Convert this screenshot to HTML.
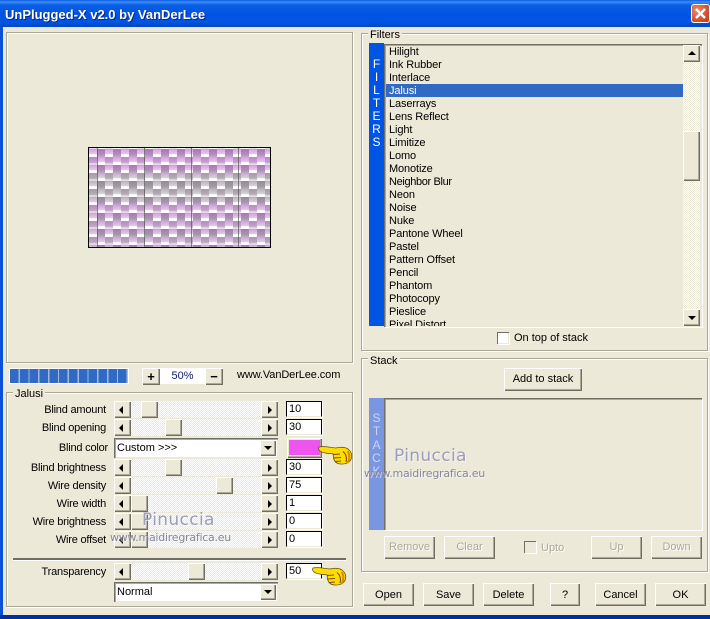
<!DOCTYPE html>
<html><head><meta charset="utf-8"><title>UnPlugged-X</title>
<style>
html,body{margin:0;padding:0;width:710px;height:619px;overflow:hidden;background:#ece9d8}
*{box-sizing:border-box}
body{font:11px/13px "Liberation Sans",sans-serif;color:#000;position:relative}
.a{position:absolute}
.t{position:absolute;white-space:nowrap;line-height:13px}
.r{position:absolute;white-space:nowrap;line-height:13px;text-align:right;width:100px;left:6px;letter-spacing:-.2px}
.gb{position:absolute;border:1px solid #aca899;box-shadow:inset 1px 1px #fff,1px 1px #fff}
.lab{position:absolute;background:#ece9d8;padding:0 2px;line-height:13px;white-space:nowrap}
.b{position:absolute;background:#ece9d8;box-shadow:inset 1px 1px #fff,inset -1px -1px #716f64,inset -2px -2px #aca899;text-align:center;white-space:nowrap}
.d{color:#aca899;text-shadow:1px 1px #fff}
.tr{position:absolute;left:114px;width:164px;height:17px;background:conic-gradient(#fff 25%,#ece9d8 0 50%,#fff 0 75%,#ece9d8 0) 0 0/2px 2px}
.sb{position:absolute;top:0;width:17px;height:17px}
.th{position:absolute;top:0;width:17px;height:17px}
.ar{position:absolute;width:0;height:0;top:5px;border:4px solid transparent;border-left-width:0;border-right:4px solid #000;left:5px}
.ar.rt{border-right-width:0;border-left:4px solid #000;left:7px}
.in{position:absolute;left:286px;width:36px;height:16px;background:#fff;border:1px solid #000;border-bottom-color:#ece9d8;padding-left:2px;line-height:14px;box-shadow:1px 1px #fff}
.cb{position:absolute;left:114px;width:164px;height:20px;background:#fff;box-shadow:inset 1px 1px #716f64,inset 2px 2px #aca899,inset -1px -1px #ece9d8;padding:4px 0 0 3px;line-height:13px}
.cbb{position:absolute;right:2px;top:2px;width:16px;height:16px}
.cbb i{position:absolute;left:4px;top:6px;width:0;height:0;border:4px solid transparent;border-bottom-width:0;border-top:4px solid #000}
.li{position:absolute;left:3px;height:13px;line-height:13px;white-space:nowrap;letter-spacing:-.12px}
.sl{position:absolute;width:15px;text-align:center;left:369px;font-size:12px;line-height:14px}
.ck{position:absolute;width:12px;height:12px;background:#fff;box-shadow:inset 1px 1px #716f64,inset -1px -1px #ece9d8,1px 1px #fff}
.wm1{position:absolute;font:400 17px/18px "DejaVu Sans",sans-serif;color:#9c9cbc;letter-spacing:.35px;text-shadow:1px 1px rgba(255,255,255,.6);white-space:nowrap}
.wm2{position:absolute;font:11px/13px "DejaVu Sans",sans-serif;color:#85869e;letter-spacing:-.25px;text-shadow:1px 1px rgba(255,255,255,.5);white-space:nowrap}
</style></head><body>

<div class="a" style="left:0;top:0;width:710px;height:27px;background:linear-gradient(#0a5ce8 0,#3d8cf5 2px,#0a5fe4 5px,#0054e3 14px,#0055e5 22px,#0049c4 26px)"></div>
<div class="t" style="left:5px;top:7px;font:bold 13px/16px 'Liberation Sans',sans-serif;color:#fff;text-shadow:1px 1px #0a2a80">UnPlugged-X v2.0 by VanDerLee</div>
<div class="a" style="left:691px;top:4px;width:19px;height:19px;border-radius:3px;background:radial-gradient(circle at 30% 30%,#e98a6c,#d8502c 60%,#c03a18);border:1px solid #fff">
<svg width="17" height="17" style="position:absolute;left:0;top:0"><path d="M4 4L13 13M13 4L4 13" stroke="#fff" stroke-width="2.4"/></svg></div>
<div class="a" style="left:0;top:27px;width:3px;height:592px;background:#0a50d8"></div>
<div class="a" style="left:0;top:615px;width:710px;height:4px;background:#00309c"></div>

<div class="gb" style="left:6px;top:32px;width:347px;height:331px"></div>

<div class="a" style="left:88px;top:147px;width:183px;height:101px;border:1px solid #000;overflow:hidden;background:#fff">
<svg width="181" height="99" style="position:absolute;left:0;top:0">
<defs>
<linearGradient id="g1" x1="0" y1="0" x2="0" y2="1"><stop offset="0" stop-color="#a27cb0"/><stop offset=".7" stop-color="#b68cc2"/><stop offset="1" stop-color="#c8a0d4"/></linearGradient>
<linearGradient id="g3" x1="0" y1="0" x2="0" y2="1"><stop offset="0" stop-color="#b48cc0"/><stop offset=".7" stop-color="#c8a0d2"/><stop offset=".8" stop-color="#e8d4ec"/><stop offset="1" stop-color="#e8d4ec"/></linearGradient>
<linearGradient id="g2" x1="0" y1="0" x2="0" y2="1"><stop offset="0" stop-color="#cfa0da"/><stop offset=".6" stop-color="#ecc4f0"/><stop offset=".7" stop-color="#fff"/><stop offset="1" stop-color="#fff"/></linearGradient>
<pattern id="p" width="16" height="16" patternUnits="userSpaceOnUse" patternTransform="translate(0 1)">
<rect x="0" y="0" width="8" height="8" fill="url(#g2)"/><rect x="8" y="0" width="8" height="8" fill="url(#g1)"/>
<rect x="0" y="8" width="8" height="8" fill="url(#g3)"/><rect x="8" y="8" width="8" height="8" fill="url(#g2)"/>
</pattern>
</defs>
<rect width="181" height="99" fill="url(#p)"/>
<rect x="8" width="1" height="99" fill="#555" opacity=".7"/><rect x="55" width="1" height="99" fill="#555" opacity=".7"/><rect x="102" width="1" height="99" fill="#555" opacity=".7"/><rect x="149" width="1" height="99" fill="#555" opacity=".7"/>
</svg>
<div class="a" style="left:0;top:0;width:181px;height:99px;mix-blend-mode:saturation;background:linear-gradient(rgba(128,128,128,0) 20%,rgba(128,128,128,.85) 30%,rgba(128,128,128,.8) 50%,rgba(128,128,128,.1) 60%,rgba(128,128,128,.3) 75%,rgba(128,128,128,.4) 100%)"></div>
</div>

<div class="a" style="left:9px;top:368px;width:120px;height:16px;background:#fff"></div>
<div class="a" style="left:10px;top:369px;width:118px;height:14px;background:repeating-linear-gradient(90deg,#316ac5 0 8.5px,#a4b8de 8.5px 9.83px)"></div>

<div class="b" style="left:142px;top:368px;width:18px;height:17px;font-weight:bold;line-height:17px;font-size:13px">+</div>
<div class="a" style="left:160px;top:368px;width:45px;height:16px;background:#fff;color:#0a1a70;text-align:center;line-height:16px">50%</div>
<div class="b" style="left:205px;top:368px;width:18px;height:17px;font-weight:bold;line-height:17px;font-size:13px">−</div>
<div class="t" style="left:237px;top:369px;letter-spacing:-.1px">www.VanDerLee.com</div>

<div class="gb" style="left:6px;top:392px;width:347px;height:215px"></div>
<div class="lab" style="left:13px;top:388px">Jalusi</div>

<div class="r" style="top:404px">Blind amount</div>
<div class="r" style="top:422px">Blind opening</div>
<div class="r" style="top:442px;left:8px">Blind color</div>
<div class="r" style="top:462px">Blind brightness</div>
<div class="r" style="top:480px">Wire density</div>
<div class="r" style="top:498px">Wire width</div>
<div class="r" style="top:516px">Wire brightness</div>
<div class="r" style="top:534px">Wire offset</div>
<div class="r" style="top:566px">Transparency</div>

<div class="tr" style="top:401px"><div class="b sb" style="left:0"><i class="ar"></i></div><div class="b sb" style="left:147px"><i class="ar rt"></i></div><div class="b th" style="left:27px"></div></div>
<div class="tr" style="top:419px"><div class="b sb" style="left:0"><i class="ar"></i></div><div class="b sb" style="left:147px"><i class="ar rt"></i></div><div class="b th" style="left:51px"></div></div>
<div class="tr" style="top:459px"><div class="b sb" style="left:0"><i class="ar"></i></div><div class="b sb" style="left:147px"><i class="ar rt"></i></div><div class="b th" style="left:51px"></div></div>
<div class="tr" style="top:477px"><div class="b sb" style="left:0"><i class="ar"></i></div><div class="b sb" style="left:147px"><i class="ar rt"></i></div><div class="b th" style="left:102px"></div></div>
<div class="tr" style="top:495px"><div class="b sb" style="left:0"><i class="ar"></i></div><div class="b sb" style="left:147px"><i class="ar rt"></i></div><div class="b th" style="left:17px"></div></div>
<div class="tr" style="top:513px"><div class="b sb" style="left:0"><i class="ar"></i></div><div class="b sb" style="left:147px"><i class="ar rt"></i></div><div class="b th" style="left:17px"></div></div>
<div class="tr" style="top:531px"><div class="b sb" style="left:0"><i class="ar"></i></div><div class="b sb" style="left:147px"><i class="ar rt"></i></div><div class="b th" style="left:17px"></div></div>
<div class="tr" style="top:563px"><div class="b sb" style="left:0"><i class="ar"></i></div><div class="b sb" style="left:147px"><i class="ar rt"></i></div><div class="b th" style="left:74px"></div></div>

<div class="in" style="top:401px">10</div>
<div class="in" style="top:419px">30</div>
<div class="in" style="top:459px">30</div>
<div class="in" style="top:477px">75</div>
<div class="in" style="top:495px">1</div>
<div class="in" style="top:513px">0</div>
<div class="in" style="top:531px">0</div>
<div class="in" style="top:563px">50</div>

<div class="cb" style="top:438px">Custom &gt;&gt;&gt;<div class="b cbb"><i></i></div></div>
<div class="cb" style="top:582px">Normal<div class="b cbb"><i></i></div></div>
<div class="b" style="left:287px;top:438px;width:35px;height:20px"></div>
<div class="a" style="left:289px;top:440px;width:31px;height:15px;background:#ee55ee"></div>

<div class="a" style="left:13px;top:558px;width:333px;height:2px;background:#716f64;box-shadow:0 1px #fff"></div>

<svg class="a" style="left:318px;top:445px" width="35" height="20" viewBox="0 0 35 20">
<path d="M1 2C6 .8 12 2.5 18 3C22 2 27 2 30 4C33 6 34.5 10 33.5 13C32.5 17 28 19.5 23 19C19 19 16.5 17 15.5 13L15 8.8C9 8.6 2 7.5 .8 4.5C.5 3.5 .5 2.5 1 2Z" fill="#ffdc00" stroke="#5a4200" stroke-width=".7"/>
<path d="M15.5 9.5L22 9M16 13L23 12.5M17.5 16.5L23 16M25 6.5C28 9 29 13 28 17" fill="none" stroke="#7a4a00" stroke-width="1"/>
<path d="M29.5 6C32 9 32 14 29.5 18" fill="none" stroke="#d88a00" stroke-width="2"/>
</svg>
<svg class="a" style="left:312px;top:566px" width="35" height="20" viewBox="0 0 35 20">
<path d="M1 2C6 .8 12 2.5 18 3C22 2 27 2 30 4C33 6 34.5 10 33.5 13C32.5 17 28 19.5 23 19C19 19 16.5 17 15.5 13L15 8.8C9 8.6 2 7.5 .8 4.5C.5 3.5 .5 2.5 1 2Z" fill="#ffdc00" stroke="#5a4200" stroke-width=".7"/>
<path d="M15.5 9.5L22 9M16 13L23 12.5M17.5 16.5L23 16M25 6.5C28 9 29 13 28 17" fill="none" stroke="#7a4a00" stroke-width="1"/>
<path d="M29.5 6C32 9 32 14 29.5 18" fill="none" stroke="#d88a00" stroke-width="2"/>
</svg>

<div class="gb" style="left:361px;top:33px;width:347px;height:318px"></div>
<div class="lab" style="left:368px;top:29px">Filters</div>
<div class="a" style="left:369px;top:43px;width:15px;height:283px;background:#0054e3"></div>
<div class="sl" style="top:57px;color:#fff">F</div><div class="sl" style="top:70px;color:#fff">I</div><div class="sl" style="top:83px;color:#fff">L</div><div class="sl" style="top:96px;color:#fff">T</div><div class="sl" style="top:109px;color:#fff">E</div><div class="sl" style="top:122px;color:#fff">R</div><div class="sl" style="top:135px;color:#fff">S</div>

<div class="a" style="left:384px;top:44px;width:318px;height:283px;box-shadow:inset 1px 1px #716f64,inset 2px 2px #aca899,1px 1px #fff"></div>
<div class="a" style="left:386px;top:84px;width:297px;height:13px;background:#316ac5"></div>
<div class="a" style="left:386px;top:46px;width:297px;height:280px;overflow:hidden">
<div class="li" style="top:0">Hilight</div>
<div class="li" style="top:13px">Ink Rubber</div>
<div class="li" style="top:26px">Interlace</div>
<div class="li" style="top:39px;color:#fff">Jalusi</div>
<div class="li" style="top:52px">Laserrays</div>
<div class="li" style="top:65px">Lens Reflect</div>
<div class="li" style="top:78px">Light</div>
<div class="li" style="top:91px">Limitize</div>
<div class="li" style="top:104px">Lomo</div>
<div class="li" style="top:117px">Monotize</div>
<div class="li" style="top:130px;letter-spacing:-.35px">Neighbor Blur</div>
<div class="li" style="top:143px">Neon</div>
<div class="li" style="top:156px">Noise</div>
<div class="li" style="top:169px">Nuke</div>
<div class="li" style="top:182px">Pantone Wheel</div>
<div class="li" style="top:195px">Pastel</div>
<div class="li" style="top:208px">Pattern Offset</div>
<div class="li" style="top:221px">Pencil</div>
<div class="li" style="top:234px">Phantom</div>
<div class="li" style="top:247px">Photocopy</div>
<div class="li" style="top:260px">Pieslice</div>
<div class="li" style="top:273px">Pixel Distort</div>
</div>
<div class="a" style="left:683px;top:45px;width:17px;height:281px;background:conic-gradient(#fff 25%,#ece9d8 0 50%,#fff 0 75%,#ece9d8 0) 0 0/2px 2px"></div>
<div class="b" style="left:683px;top:45px;width:17px;height:17px"><i class="a" style="left:5px;top:6px;border:4px solid transparent;border-top-width:0;border-bottom:4px solid #000"></i></div>
<div class="b" style="left:683px;top:131px;width:17px;height:50px"></div>
<div class="b" style="left:683px;top:309px;width:17px;height:17px"><i class="a" style="left:5px;top:7px;border:4px solid transparent;border-bottom-width:0;border-top:4px solid #000"></i></div>

<div class="ck" style="left:497px;top:332px"></div>
<div class="t" style="left:514px;top:332px">On top of stack</div>

<div class="gb" style="left:361px;top:358px;width:347px;height:214px"></div>
<div class="lab" style="left:368px;top:355px">Stack</div>
<div class="b" style="left:504px;top:368px;width:78px;height:23px;line-height:22px">Add to stack</div>

<div class="a" style="left:369px;top:398px;width:15px;height:132px;background:#7b96e0"></div>
<div class="sl" style="top:411px;color:#c8d6f6">S</div><div class="sl" style="top:424px;color:#c8d6f6">T</div><div class="sl" style="top:438px;color:#c8d6f6">A</div><div class="sl" style="top:451px;color:#c8d6f6">C</div><div class="sl" style="top:464px;color:#c8d6f6">K</div>
<div class="a" style="left:384px;top:398px;width:318px;height:132px;box-shadow:inset 1px 1px #716f64,inset 2px 2px #aca899,1px 1px #fff"></div>

<div class="b d" style="left:384px;top:536px;width:51px;height:23px;line-height:22px">Remove</div>
<div class="b d" style="left:444px;top:536px;width:51px;height:23px;line-height:22px">Clear</div>
<div class="ck" style="left:524px;top:541px;background:#ece9d8"></div>
<div class="t d" style="left:541px;top:542px">Upto</div>
<div class="b d" style="left:591px;top:536px;width:51px;height:23px;line-height:22px">Up</div>
<div class="b d" style="left:651px;top:536px;width:51px;height:23px;line-height:22px">Down</div>

<div class="b" style="left:363px;top:583px;width:51px;height:23px;line-height:25px">Open</div>
<div class="b" style="left:423px;top:583px;width:51px;height:23px;line-height:25px">Save</div>
<div class="b" style="left:483px;top:583px;width:51px;height:23px;line-height:25px">Delete</div>
<div class="b" style="left:550px;top:583px;width:30px;height:23px;line-height:25px">?</div>
<div class="b" style="left:595px;top:583px;width:51px;height:23px;line-height:25px">Cancel</div>
<div class="b" style="left:655px;top:583px;width:51px;height:23px;line-height:25px">OK</div>

<div class="wm1" style="left:142px;top:511px">Pinuccia</div>
<div class="wm2" style="left:110px;top:531px">www.maidiregrafica.eu</div>
<div class="wm1" style="left:394px;top:447px">Pinuccia</div>
<div class="wm2" style="left:364px;top:467px">www.maidiregrafica.eu</div>

</body></html>
